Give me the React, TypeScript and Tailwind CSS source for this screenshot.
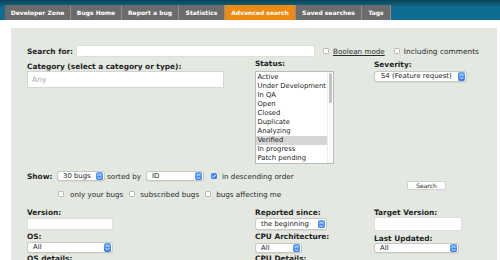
import React from 'react';

const lbl = "font-['DejaVu_Sans',sans-serif] font-bold text-[7.4px] leading-[9px] text-[#1f1f1f] whitespace-nowrap";
const txt = "font-['DejaVu_Sans',sans-serif] text-[7.2px] leading-[9px] text-[#2a2a2a] whitespace-nowrap";

const tabs = [
    { name: 'Developer Zone', w: 'w-[66px]' },
    { name: 'Bugs Home', w: 'w-[51px]' },
    { name: 'Report a bug', w: 'w-[57px]' },
    { name: 'Statistics', w: 'w-[46px]' },
    { name: 'Advanced search', w: 'w-[71px]', active: true },
    { name: 'Saved searches', w: 'w-[66px]' },
    { name: 'Tags', w: 'w-[29px]' },
];

const statuses = [
    'Active',
    'Under Development',
    'In QA',
    'Open',
    'Closed',
    'Duplicate',
    'Analyzing',
    'Verified',
    'In progress',
    'Patch pending',
];

const Stepper = () => (
    <span className="ml-auto mr-[1px] flex h-[8.5px] w-[7px] items-center justify-center rounded-[2px] bg-[linear-gradient(to_bottom,#6aa9fb,#2f78ee)]">
        <svg width="7" height="9" viewBox="0 0 7 9" fill="none">
            <path d="M2 3.6 L3.5 2.1 L5 3.6" stroke="white" strokeWidth="0.9" strokeLinecap="round" strokeLinejoin="round" />
            <path d="M2 5.4 L3.5 6.9 L5 5.4" stroke="white" strokeWidth="0.9" strokeLinecap="round" strokeLinejoin="round" />
        </svg>
    </span>
);

const Select = ({ text, className }: { text: string; className: string }) => (
    <div
        className={`flex items-center rounded-[3px] border border-[#c6c9c4] bg-white pl-[5px] font-['DejaVu_Sans',sans-serif] text-[6.9px] text-[#222] shadow-[0_0.5px_0.5px_rgba(0,0,0,0.12)] ${className}`}
    >
        <span className="whitespace-nowrap">{text}</span>
        <Stepper />
    </div>
);

// mac style checkbox
const Check = ({ checked = false, className = '' }: { checked?: boolean; className?: string }) =>
    checked ? (
        <span className={`flex h-[6px] w-[6px] shrink-0 items-center justify-center rounded-[1.5px] bg-[#3b87f3] ${className}`}>
            <svg width="6" height="6" viewBox="0 0 6 6" fill="none">
                <path d="M1.4 3.1 L2.5 4.2 L4.6 1.8" stroke="white" strokeWidth="0.9" strokeLinecap="round" strokeLinejoin="round" />
            </svg>
        </span>
    ) : (
        <span className={`block h-[6px] w-[6px] shrink-0 rounded-[1.5px] border border-[#b4b4b4] bg-white ${className}`} />
    );

const Input = ({ className }: { className: string }) => (
    <div className={`border border-[#dcdfda] bg-white ${className}`} />
);

export default function App() {
    return (
        <div className="h-[260px] w-[500px] overflow-hidden bg-white">
            {/* header */}
            <div className="flex h-[20px] items-end bg-[linear-gradient(to_bottom,#0b4153_0px,#0e5f80_5px,#0f6d94_8px,#0f6d94_20px)] pl-[5px]">
                {tabs.map((t) => (
                    <div
                        key={t.name}
                        className={`flex h-[15px] items-center justify-center border-r border-[#8f8f8f] font-['DejaVu_Sans',sans-serif] text-[6px] font-bold text-white ${t.w} ${t.active ? 'bg-[#ee8a12]' : 'bg-[#6b6b6b]'}`}
                    >
                        {t.name}
                    </div>
                ))}
            </div>

            {/* search panel */}
            <div className="ml-[11px] mt-[8px] h-[232px] w-[486px] bg-[#e3e8e0] pl-[16px] pt-[17px]">
                <div className="flex h-[12px] items-center">
                    <div className={`${lbl} w-[49px]`}>Search for:</div>
                    <Input className="h-[12px] w-[239px]" />
                    <Check className="ml-[8px]" />
                    <span className={`${txt} ml-[4px] underline`}>Boolean mode</span>
                    <Check className="ml-[9px]" />
                    <span className={`${txt} ml-[4px] text-[7.4px]`}>Including comments</span>
                </div>

                <div className="mt-[2px] grid grid-cols-[228px_119px_1fr]">
                    <div className="pt-[3px]">
                        <div className={lbl}>Category (select a category or type):</div>
                        <div className="flex h-[17px] w-[197px] items-center border border-[#d3d6d1] bg-white pl-[4px]">
                            <span className="font-['DejaVu_Sans',sans-serif] text-[7.5px] text-[#a8a8a8]">Any</span>
                        </div>
                    </div>
                    <div>
                        <div className={lbl}>Status:</div>
                        <div className="mt-[3px] flex h-[93px] w-[79px] border border-[#b9bcb8] bg-white">
                            <div className="flex-1 pt-[0.5px]">
                                {statuses.map((s) => (
                                    <div
                                        key={s}
                                        className={`h-[9.1px] pl-[1.5px] font-['DejaVu_Sans',sans-serif] text-[6.8px] leading-[9.1px] whitespace-nowrap text-[#222] ${s === 'Verified' ? 'bg-[#d6d6d6]' : ''}`}
                                    >
                                        {s}
                                    </div>
                                ))}
                            </div>
                            <div className="w-[6px] border-l border-[#ececec] bg-[#fafafa] pt-[1px]">
                                <div className="mx-auto h-[30px] w-[3px] rounded-[2px] bg-[#c4c4c4]" />
                            </div>
                        </div>
                    </div>
                    <div className="pt-[1px]">
                        <div className={lbl}>Severity:</div>
                        <Select text="S4 (Feature request)" className="mt-[2px] h-[11px] w-[93px] pl-[6px]" />
                    </div>
                </div>

                {/* show / sort */}
                <div className="mt-[7px] flex items-start">
                    <div className="w-[380px]">
                        <div className="flex h-[10px] items-center">
                            <div className={`${lbl} w-[30px]`}>Show:</div>
                            <Select text="30 bugs" className="h-[10px] w-[48px]" />
                            <div className={`${txt} w-[41px] pl-[2px]`}>sorted by</div>
                            <Select text="ID" className="h-[10px] w-[58px]" />
                            <Check checked className="ml-[7px]" />
                            <span className={`${txt} ml-[5px]`}>in descending order</span>
                        </div>
                        <div className="mt-[9px] flex h-[8px] items-center pl-[31px]">
                            <Check />
                            <span className={`${txt} ml-[6px]`}>only your bugs</span>
                            <Check className="ml-[6px]" />
                            <span className={`${txt} ml-[5px]`}>subscribed bugs</span>
                            <Check className="ml-[6px]" />
                            <span className={`${txt} ml-[5px]`}>bugs affecting me</span>
                        </div>
                    </div>
                    <button className="mt-[10px] flex h-[9px] w-[39px] items-center justify-center rounded-[2px] border border-[#d0d0d0] bg-white font-['DejaVu_Sans',sans-serif] text-[6px] text-[#222]">
                        Search
                    </button>
                </div>

                {/* lower fields */}
                <div className="mt-[10px] grid grid-cols-[228px_119px_1fr]">
                    <div>
                        <div className={lbl}>Version:</div>
                        <Input className="mt-[1px] h-[12px] w-[86px]" />
                        <div className={`${lbl} mt-[2px]`}>OS:</div>
                        <Select text="All" className="mt-[1px] h-[11px] w-[86px]" />
                        <div className={`${lbl} mt-[1px]`}>OS details:</div>
                    </div>
                    <div>
                        <div className={lbl}>Reported since:</div>
                        <Select text="the beginning" className="mt-[1px] h-[12px] w-[72px]" />
                        <div className={`${lbl} mt-[2px]`}>CPU Architecture:</div>
                        <Select text="All" className="mt-[2px] h-[10px] w-[47px]" />
                        <div className={`${lbl} mt-[0.5px]`}>CPU Details:</div>
                    </div>
                    <div>
                        <div className={lbl}>Target Version:</div>
                        <Input className="h-[14px] w-[88px]" />
                        <div className={`${lbl} mt-[2.5px]`}>Last Updated:</div>
                        <Select text="All" className="mt-[0.5px] h-[10px] w-[85px]" />
                    </div>
                </div>
            </div>
        </div>
    );
}
